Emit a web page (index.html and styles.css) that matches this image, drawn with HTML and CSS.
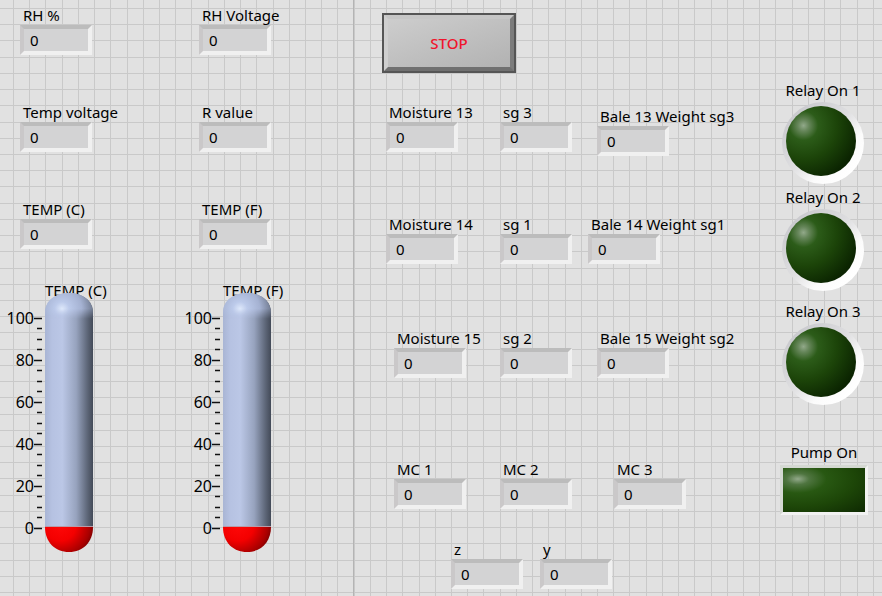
FILE: index.html
```
<!DOCTYPE html>
<html lang="en">
<head>
<meta charset="utf-8">
<title>Bale moisture control panel</title>
<link rel="stylesheet" href="styles.css">
</head>
<body>
<svg class="defs" aria-hidden="true">
  <defs>
    <linearGradient id="glass">
      <stop offset="0" stop-color="#a9b5d4"/>
      <stop offset=".15" stop-color="#b6c2e2"/>
      <stop offset=".36" stop-color="#bbc7e6"/>
      <stop offset=".65" stop-color="#97a3be"/>
      <stop offset=".88" stop-color="#5e6779"/>
      <stop offset="1" stop-color="#434a58"/>
    </linearGradient>
    <radialGradient id="cap" gradientUnits="userSpaceOnUse" cx="28" cy="16" r="36">
      <stop offset="0" stop-color="#dfe9fb"/>
      <stop offset=".2" stop-color="#bccaea"/>
      <stop offset=".55" stop-color="#a5b2d2"/>
      <stop offset="1" stop-color="#5b6475"/>
    </radialGradient>
    <linearGradient id="capFade" x1="0" y1="0" x2="0" y2="1">
      <stop offset=".6" stop-color="#fff"/>
      <stop offset="1" stop-color="#000"/>
    </linearGradient>
    <mask id="capMask"><rect x="11" y="0" width="49" height="26" fill="url(#capFade)"/></mask>
    <radialGradient id="mercury" gradientUnits="userSpaceOnUse" cx="26" cy="232" r="40">
      <stop offset="0" stop-color="#ff0808"/>
      <stop offset=".4" stop-color="#f40000"/>
      <stop offset=".75" stop-color="#a80000"/>
      <stop offset="1" stop-color="#4a0000"/>
    </radialGradient>
    <linearGradient id="ring" x1=".15" y1=".15" x2=".85" y2=".85">
      <stop offset="0" stop-color="#cbcbcf"/>
      <stop offset=".45" stop-color="#dedee0"/>
      <stop offset=".75" stop-color="#fbfbfb"/>
      <stop offset="1" stop-color="#fff"/>
    </linearGradient>
    <radialGradient id="led" cx=".25" cy=".28" r=".8">
      <stop offset="0" stop-color="#92a98a"/>
      <stop offset=".1" stop-color="#66865a"/>
      <stop offset=".26" stop-color="#2c5c19"/>
      <stop offset=".6" stop-color="#1c4409"/>
      <stop offset="1" stop-color="#0b2401"/>
    </radialGradient>
    <g id="thermo">
      <path d="M0 25.500h8M0 67.500h8M0 109.500h8M0 151.500h8M0 193.500h8M0 235.500h8M3 35.500h5M3 46.500h5M3 56.500h5M3 77.500h5M3 88.500h5M3 98.500h5M3 119.500h5M3 130.500h5M3 140.500h5M3 161.500h5M3 172.500h5M3 182.500h5M3 203.500h5M3 214.500h5M3 224.500h5" stroke="#111" stroke-width="1.500"/>
      <path d="M11 234V20C11 7 22 0 35 0S59 7 59 20V234Z" fill="url(#glass)"/>
      <path d="M11 26V20C11 7 22 0 35 0S59 7 59 20V26Z" fill="url(#cap)" mask="url(#capMask)"/>
      <path d="M11 234H59C59 249 49 259 35 259S11 249 11 234Z" fill="url(#mercury)"/>
      <path d="M11 233.500H59" stroke="#b99ba8"/>
    </g>
    <g id="lamp">
      <circle cx="43" cy="43" r="41" fill="url(#ring)"/>
      <circle cx="41" cy="41" r="35" fill="url(#led)"/>
    </g>
  </defs>
</svg>

<main class="panel">
  <section class="climate">
    <div class="readings">
      <div class="field"><label for="rh">RH %</label><output id="rh">0</output></div>
      <div class="field"><label for="rhv">RH Voltage</label><output id="rhv">0</output></div>
      <div class="field"><label for="tv">Temp voltage</label><output id="tv">0</output></div>
      <div class="field"><label for="rv">R value</label><output id="rv">0</output></div>
      <div class="field"><label for="tc">TEMP (C)</label><output id="tc">0</output></div>
      <div class="field"><label for="tf">TEMP (F)</label><output id="tf">0</output></div>
    </div>
    <div class="thermometers">
      <figure class="thermometer">
        <figcaption>TEMP (C)</figcaption>
        <div class="gauge">
          <ol class="scale"><li>100</li><li>80</li><li>60</li><li>40</li><li>20</li><li>0</li></ol>
          <svg class="tube" viewBox="0 0 60 259" aria-hidden="true"><use href="#thermo"/></svg>
        </div>
      </figure>
      <figure class="thermometer">
        <figcaption>TEMP (F)</figcaption>
        <div class="gauge">
          <ol class="scale"><li>100</li><li>80</li><li>60</li><li>40</li><li>20</li><li>0</li></ol>
          <svg class="tube" viewBox="0 0 60 259" aria-hidden="true"><use href="#thermo"/></svg>
        </div>
      </figure>
    </div>
  </section>

  <section class="bales">
    <button class="stop" type="button">STOP</button>
    <div class="row row-13">
      <div class="field"><label for="m13">Moisture 13</label><output id="m13">0</output></div>
      <div class="field"><label for="sg3">sg 3</label><output id="sg3">0</output></div>
      <div class="field weight"><label for="w13">Bale 13 Weight sg3</label><output id="w13">0</output></div>
    </div>
    <div class="row row-14">
      <div class="field"><label for="m14">Moisture 14</label><output id="m14">0</output></div>
      <div class="field"><label for="sg1">sg 1</label><output id="sg1">0</output></div>
      <div class="field weight"><label for="w14">Bale 14 Weight sg1</label><output id="w14">0</output></div>
    </div>
    <div class="row row-15">
      <div class="field"><label for="m15">Moisture 15</label><output id="m15">0</output></div>
      <div class="field"><label for="sg2">sg 2</label><output id="sg2">0</output></div>
      <div class="field weight"><label for="w15">Bale 15 Weight sg2</label><output id="w15">0</output></div>
    </div>
    <div class="row row-mc">
      <div class="field"><label for="mc1">MC 1</label><output id="mc1">0</output></div>
      <div class="field"><label for="mc2">MC 2</label><output id="mc2">0</output></div>
      <div class="field"><label for="mc3">MC 3</label><output id="mc3">0</output></div>
    </div>
    <div class="row row-zy">
      <div class="field"><label for="z">z</label><output id="z">0</output></div>
      <div class="field"><label for="y">y</label><output id="y">0</output></div>
    </div>
  </section>

  <section class="relays">
    <div class="relay-pair">
      <div class="relay"><span>Relay On 1</span><svg class="lamp" viewBox="0 0 86 84" role="img" aria-label="off"><use href="#lamp"/></svg></div>
      <div class="relay"><span>Relay On 2</span><svg class="lamp" viewBox="0 0 86 84" role="img" aria-label="off"><use href="#lamp"/></svg></div>
    </div>
    <div class="relay"><span>Relay On 3</span><svg class="lamp" viewBox="0 0 86 84" role="img" aria-label="off"><use href="#lamp"/></svg></div>
    <div class="relay pump"><span>Pump On</span><div class="pump-lamp" role="img" aria-label="off"></div></div>
  </section>
</main>
</body>
</html>
```

FILE: styles.css
```
* { box-sizing: border-box; }

body {
  margin: 0;
  background: #e1e1e1;
  color: #000;
  font: 15px/20px "Noto Sans", "Open Sans", sans-serif;
}

.defs { position: absolute; width: 0; height: 0; }

/* Alignment grid: nine cells per 146px tile */
.panel {
  --line: #c9c9c9;
  --stops: var(--line) 0 1px, transparent 1px 16px, var(--line) 16px 17px, transparent 17px 32px,
    var(--line) 32px 33px, transparent 33px 49px, var(--line) 49px 50px, transparent 50px 65px,
    var(--line) 65px 66px, transparent 66px 81px, var(--line) 81px 82px, transparent 82px 97px,
    var(--line) 97px 98px, transparent 98px 114px, var(--line) 114px 115px, transparent 115px 130px,
    var(--line) 130px 131px, transparent 131px 146px;
  display: grid;
  grid-template-columns: 354px 1fr 102px;
  min-height: 100vh;
  background-image: linear-gradient(90deg, var(--stops)), linear-gradient(var(--stops));
  background-size: 146px 146px;
  background-position: 13px 8px;
}

.field label { display: block; padding-left: 3px; white-space: nowrap; }

.field output {
  display: block;
  width: 72px;
  height: 30px;
  padding-left: 6px;
  border: 4px solid;
  border-color: #bcbcbc #f0f0f0 #f0f0f0 #cac8c9;
  background: #d3d3d4;
  line-height: 22px;
}

.climate { padding-top: 5px; border-right: 1px solid #b4b4b4; }

.readings {
  display: grid;
  grid-template-columns: 179px 1fr;
  row-gap: 47px;
  padding-left: 20px;
}

.thermometers {
  display: grid;
  grid-template-columns: 178px 1fr;
  padding: 31px 0 0 6px;
}

.thermometer { margin: 0; }
.thermometer figcaption { padding-left: 39px; }
.gauge { display: flex; margin-top: -7px; }

.scale {
  width: 28px;
  margin: 0;
  padding: 4px 0 0;
  list-style: none;
  text-align: right;
  font-size: 16px;
  line-height: 42px;
}

.tube { position: relative; width: 60px; height: 259px; }

.bales { padding-top: 13px; }

.stop {
  display: block;
  width: 134px;
  height: 60px;
  margin: 0 0 29px 28px;
  padding: 0;
  border: 6px solid;
  border-color: #c6c6c6 #7c7c7c #707070 #cfcfcf;
  outline: 2px solid #555;
  outline-offset: -2px;
  background: linear-gradient(160deg, #cdcdcd, #b2b2b2);
  color: #f0142c;
  font: inherit;
  font-weight: 500;
}

.row { display: grid; }
.weight { align-self: end; }
.row-13 { grid-template-columns: 114px 97px 1fr; min-height: 54px; padding-left: 32px; margin-bottom: 58px; }
.row-14 { grid-template-columns: 114px 88px 1fr; padding-left: 32px; margin-bottom: 64px; }
.row-15 { grid-template-columns: 106px 97px 1fr; padding-left: 40px; margin-bottom: 81px; }
.row-mc { grid-template-columns: 106px 114px 1fr; padding-left: 40px; margin-bottom: 30px; }
.row-zy { grid-template-columns: 89px 1fr; padding-left: 97px; }

.relays { display: flex; flex-direction: column; gap: 10px; padding-top: 80px; }
.relay-pair { display: grid; gap: 3px; }
.relay { width: 86px; text-align: center; }
.relay span { display: block; }
.lamp { display: block; width: 86px; height: 84px; }
.pump { width: 88px; margin-top: 27px; }

.pump-lamp {
  height: 50px;
  margin-top: 3px;
  border: 3px solid;
  border-color: #d4d8d2 #f2f2f2 #f2f2f2 #d4d8d2;
  background: radial-gradient(ellipse at 18% 25%, #92a98a, #4f7540 12%, #285812 30%, #1d4608 60%, #0e2902);
}
```
